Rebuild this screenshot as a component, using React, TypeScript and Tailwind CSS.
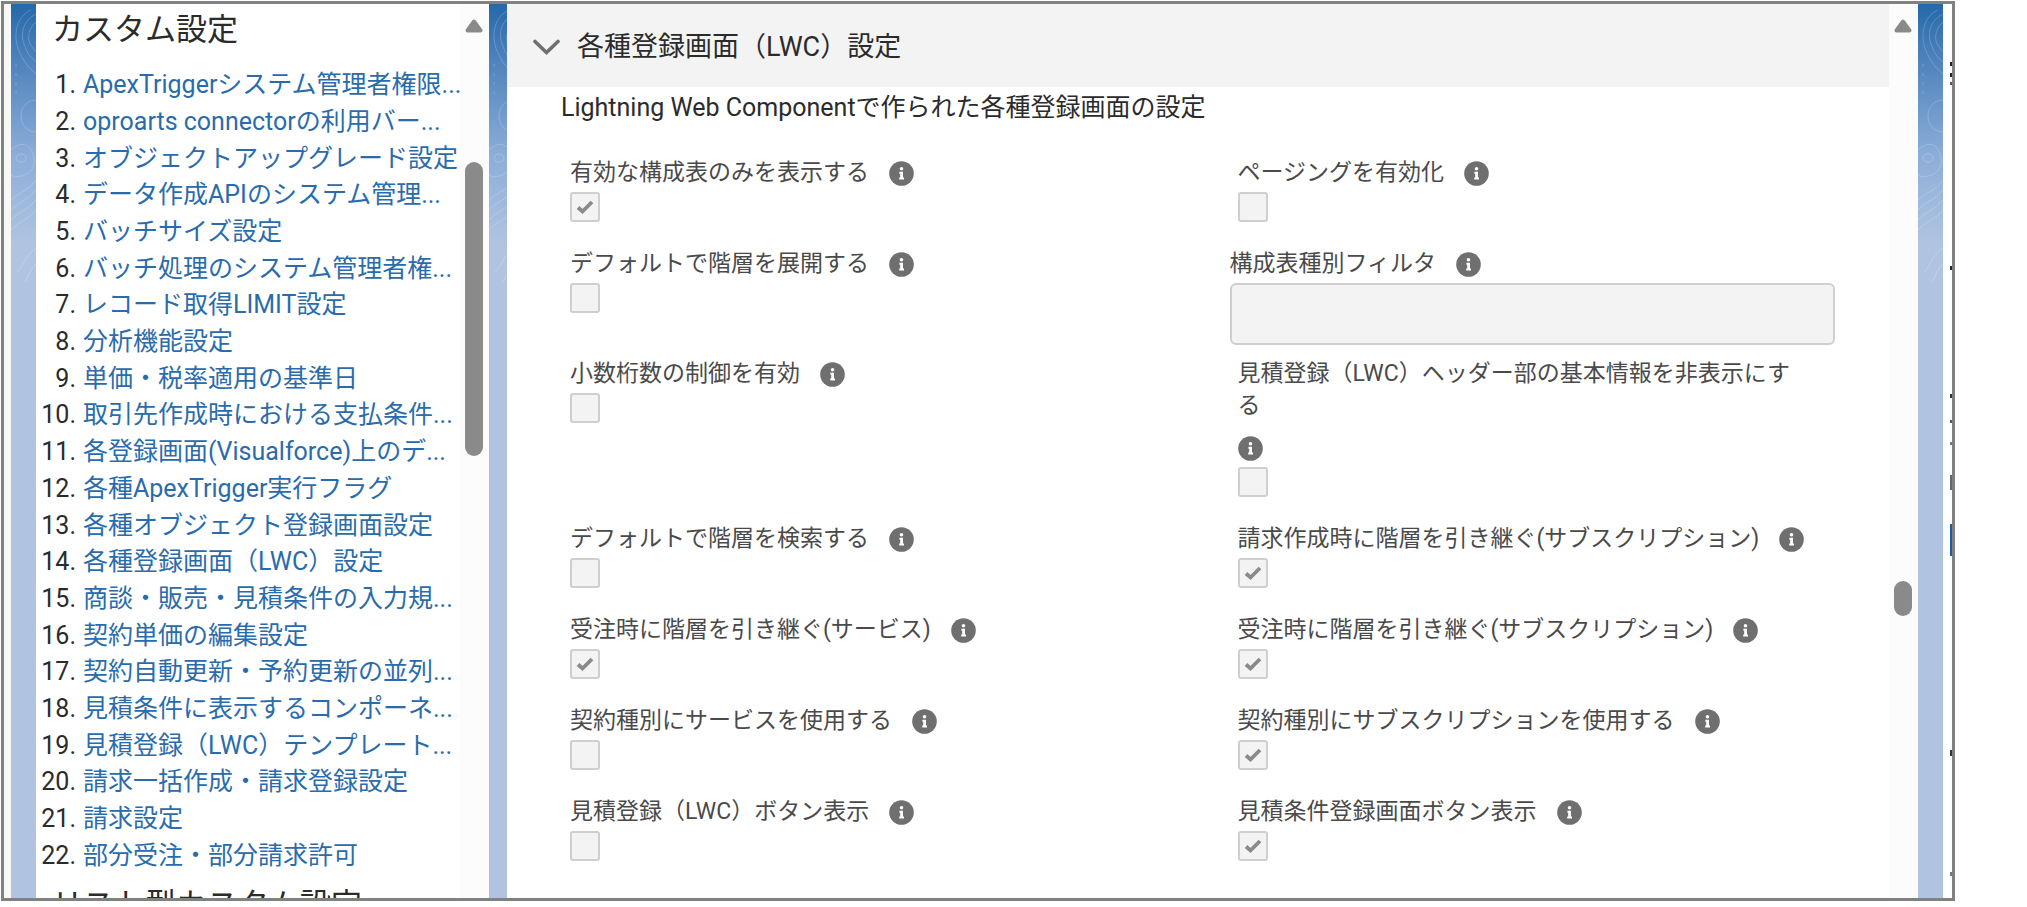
import clsx from "clsx";

const SETTINGS = [
  "ApexTriggerシステム管理者権限...",
  "oproarts connectorの利用バー...",
  "オブジェクトアップグレード設定",
  "データ作成APIのシステム管理...",
  "バッチサイズ設定",
  "バッチ処理のシステム管理者権...",
  "レコード取得LIMIT設定",
  "分析機能設定",
  "単価・税率適用の基準日",
  "取引先作成時における支払条件...",
  "各登録画面(Visualforce)上のデ...",
  "各種ApexTrigger実行フラグ",
  "各種オブジェクト登録画面設定",
  "各種登録画面（LWC）設定",
  "商談・販売・見積条件の入力規...",
  "契約単価の編集設定",
  "契約自動更新・予約更新の並列...",
  "見積条件に表示するコンポーネ...",
  "見積登録（LWC）テンプレート...",
  "請求一括作成・請求登録設定",
  "請求設定",
  "部分受注・部分請求許可",
];

type Field = { id: string; label: string; type: "checkbox" | "text"; checked?: boolean };

const FIELDS: Field[] = [
  { id: "active-only", label: "有効な構成表のみを表示する", type: "checkbox", checked: true },
  { id: "paging", label: "ページングを有効化", type: "checkbox" },
  { id: "expand", label: "デフォルトで階層を展開する", type: "checkbox" },
  { id: "type-filter", label: "構成表種別フィルタ", type: "text" },
  { id: "decimals", label: "小数桁数の制御を有効", type: "checkbox" },
  { id: "hide-header", label: "見積登録（LWC）ヘッダー部の基本情報を非表示にする", type: "checkbox" },
  { id: "search", label: "デフォルトで階層を検索する", type: "checkbox" },
  { id: "bill-subscription", label: "請求作成時に階層を引き継ぐ(サブスクリプション)", type: "checkbox", checked: true },
  { id: "order-service", label: "受注時に階層を引き継ぐ(サービス)", type: "checkbox", checked: true },
  { id: "order-subscription", label: "受注時に階層を引き継ぐ(サブスクリプション)", type: "checkbox", checked: true },
  { id: "contract-service", label: "契約種別にサービスを使用する", type: "checkbox" },
  { id: "contract-subscription", label: "契約種別にサブスクリプションを使用する", type: "checkbox", checked: true },
  { id: "quote-button", label: "見積登録（LWC）ボタン表示", type: "checkbox" },
  { id: "terms-button", label: "見積条件登録画面ボタン表示", type: "checkbox", checked: true },
];

function InfoIcon() {
  return (
    <svg viewBox="0 0 25 25" className="size-[25px]" aria-hidden="true">
      <circle cx="12.5" cy="12.5" r="12.3" fill="#6f6f6f" />
      <circle cx="12.5" cy="7.8" r="1.8" fill="#fff" />
      <path d="M10.4 10.8h3.6v5.6h1v2h-4.8v-2h1v-3.6h-.8z" fill="#fff" />
    </svg>
  );
}

function ScrollArrow() {
  return (
    <svg viewBox="0 0 18 14" className="h-[14px] w-[18px]" aria-hidden="true">
      <path d="M9 2.5 15.5 11.5h-13z" fill="#8a8a8a" stroke="#8a8a8a" strokeWidth="4" strokeLinejoin="round" />
    </svg>
  );
}

function Scrollbar({ thumb }: { thumb: string }) {
  return (
    <div className="flex w-[29px] shrink-0 flex-col items-center bg-[#fcfcfc] pt-[15px] pr-[2px]">
      <ScrollArrow />
      <div className={clsx("w-[18px] rounded-full bg-[#8a8a8a]", thumb)} />
    </div>
  );
}

function Wallpaper({ className }: { className: string }) {
  return (
    <div
      className={clsx(
        "shrink-0 bg-linear-to-b from-[#2469aa] from-0% via-[#8badd8] via-[150px] to-[#b0c4e1] to-[240px]",
        className,
      )}
    >
      <svg viewBox="0 0 25 300" preserveAspectRatio="xMinYMin slice" className="h-[300px] w-full" aria-hidden="true">
        <g fill="none" stroke="#fff" strokeOpacity="0.2">
          <path d="M20 6C6 12 2 30 7 44s11 20 18 26" />
          <path d="M25 10C13 16 9 28 13 40s8 14 12 18" />
          <path d="M25 18c-7 6-9 15-6 22l6 8" />
          <path d="M5 60v34" strokeDasharray="3 6" />
          <path d="M25 96c-10 0-15 8-15 16s5 16 15 16" />
          <path d="M0 146c8-8 18-8 22 4s-2 20-12 22-8 0-10-2" />
          <ellipse cx="10" cy="154" rx="5" ry="4" />
          <path d="M0 196c8-8 16-8 25-20M0 206c8-9 16-9 25-20M0 216c8-9 16-9 25-20M0 226c8-9 16-9 25-20" />
          <path d="M6 268c6-4 6-14 19-24M14 278c4-6 4-12 11-18" />
        </g>
      </svg>
    </div>
  );
}

// Slivers of the page behind, showing along the window's right edge.
const EDGE_MARKS = [
  { y: 58, height: 4, color: "#222" },
  { y: 69, height: 4, color: "#222" },
  { y: 78, height: 3, color: "#555" },
  { y: 262, height: 4, color: "#222" },
  { y: 390, height: 4, color: "#333" },
  { y: 416, height: 3, color: "#555" },
  { y: 438, height: 3, color: "#777" },
  { y: 471, height: 15, color: "#666" },
  { y: 520, height: 32, color: "#1b5d9e" },
  { y: 746, height: 6, color: "#333" },
  { y: 868, height: 4, color: "#777" },
];

function WindowEdge() {
  return (
    <div className="flex w-[9px] shrink-0 justify-end bg-white">
      <svg className="h-full w-[2px]" aria-hidden="true">
        {EDGE_MARKS.map((mark) => (
          <rect key={mark.y} y={mark.y} width="2" height={mark.height} fill={mark.color} />
        ))}
      </svg>
    </div>
  );
}

function Sidebar() {
  return (
    <aside className="flex w-[453px] shrink-0 overflow-hidden rounded-t-md bg-white">
      <nav className="min-w-0 flex-1 pt-[3px]">
        <h2 className="pl-4 text-[31px] leading-[46px] text-[#2b2b2b]">カスタム設定</h2>
        <ol className="mt-[14px] grid h-[807px] auto-rows-fr text-[25px] leading-9">
          {SETTINGS.map((name, index) => (
            <li key={name} className="flex items-center whitespace-nowrap">
              <span className="w-10 text-right text-[#2b2b2b]">{index + 1}.</span>
              <a href="#settings" className="ml-[7px] text-[#2a6cab]">
                {name}
              </a>
            </li>
          ))}
        </ol>
        <h2 className="mt-2 pl-4 text-[31px] leading-[46px] text-[#2b2b2b]">リスト型カスタム設定</h2>
      </nav>
      <Scrollbar thumb="mt-[129px] h-[294px]" />
    </aside>
  );
}

function CheckboxControl({ id, checked }: { id: string; checked?: boolean }) {
  return (
    <span className="grid size-[30px] place-items-center">
      <input
        id={id}
        type="checkbox"
        defaultChecked={checked}
        disabled
        className="col-start-1 row-start-1 size-[30px] appearance-none rounded-[3px] border-2 border-[#cfcfcf] bg-[#f3f3f3]"
      />
      {checked && (
        <svg viewBox="0 0 18 16" className="z-10 col-start-1 row-start-1 h-4 w-[18px]" aria-hidden="true">
          <path d="M2 8.5 6.5 12.5 16 3" fill="none" stroke="#8a8a8a" strokeWidth="3.8" />
        </svg>
      )}
    </span>
  );
}

function SettingField({ field }: { field: Field }) {
  const isText = field.type === "text";

  return (
    <div className={isText ? "pb-3" : "pr-6 pb-[25px] pl-2"}>
      <div className="mb-[2px] flex flex-wrap items-center gap-x-5 gap-y-2">
        <label htmlFor={field.id} className="py-px text-[23px] leading-8 text-[#4a4a4a]">
          {field.label}
        </label>
        <span className="flex h-[34px] items-center">
          <InfoIcon />
        </span>
      </div>
      {isText ? (
        <input
          id={field.id}
          type="text"
          disabled
          className="block h-[62px] w-full rounded-md border-2 border-[#cfcfcf] bg-[#f3f3f3] px-4 text-[23px]"
        />
      ) : (
        <CheckboxControl id={field.id} checked={field.checked} />
      )}
    </div>
  );
}

function SettingsPanel() {
  return (
    <main id="settings" className="flex min-w-0 flex-1 overflow-hidden rounded-t-md bg-white">
      <div className="min-w-0 flex-1">
        <h3 className="bg-[#f3f3f3]">
          <button type="button" className="flex h-[83px] w-full items-center gap-[17px] pt-1 pl-[26px] text-[27px] text-[#2b2b2b]">
            <svg viewBox="0 0 27 17" className="h-[17px] w-[27px]" aria-hidden="true">
              <path d="M2 2.5 13.5 13.5 25 2.5" fill="none" stroke="#6f6f6f" strokeWidth="3.6" strokeLinecap="round" />
            </svg>
            各種登録画面（LWC）設定
          </button>
        </h3>
        <p className="mt-[3px] pl-[54px] text-[25px] leading-9 text-[#2b2b2b]">
          Lightning Web Componentで作られた各種登録画面の設定
        </p>
        <div className="mt-[30px] grid grid-cols-2 gap-x-[62px] pr-[54px] pl-[55px]">
          {FIELDS.map((field) => (
            <SettingField key={field.id} field={field} />
          ))}
        </div>
      </div>
      <Scrollbar thumb="mt-[548px] h-[35px]" />
    </main>
  );
}

export default function App() {
  return (
    <div className="h-screen bg-white pt-px pr-[72px] pb-[6px] pl-px font-[Roboto,'Noto_Sans_CJK_JP',sans-serif]">
      <div className="flex h-full overflow-hidden border-[3px] border-[#7f827f]">
        <div className="w-[7px] shrink-0 bg-[#f8f8f6]" />
        <Wallpaper className="w-[25px]" />
        <Sidebar />
        <Wallpaper className="w-[18px]" />
        <SettingsPanel />
        <Wallpaper className="w-[25px]" />
        <WindowEdge />
      </div>
    </div>
  );
}
